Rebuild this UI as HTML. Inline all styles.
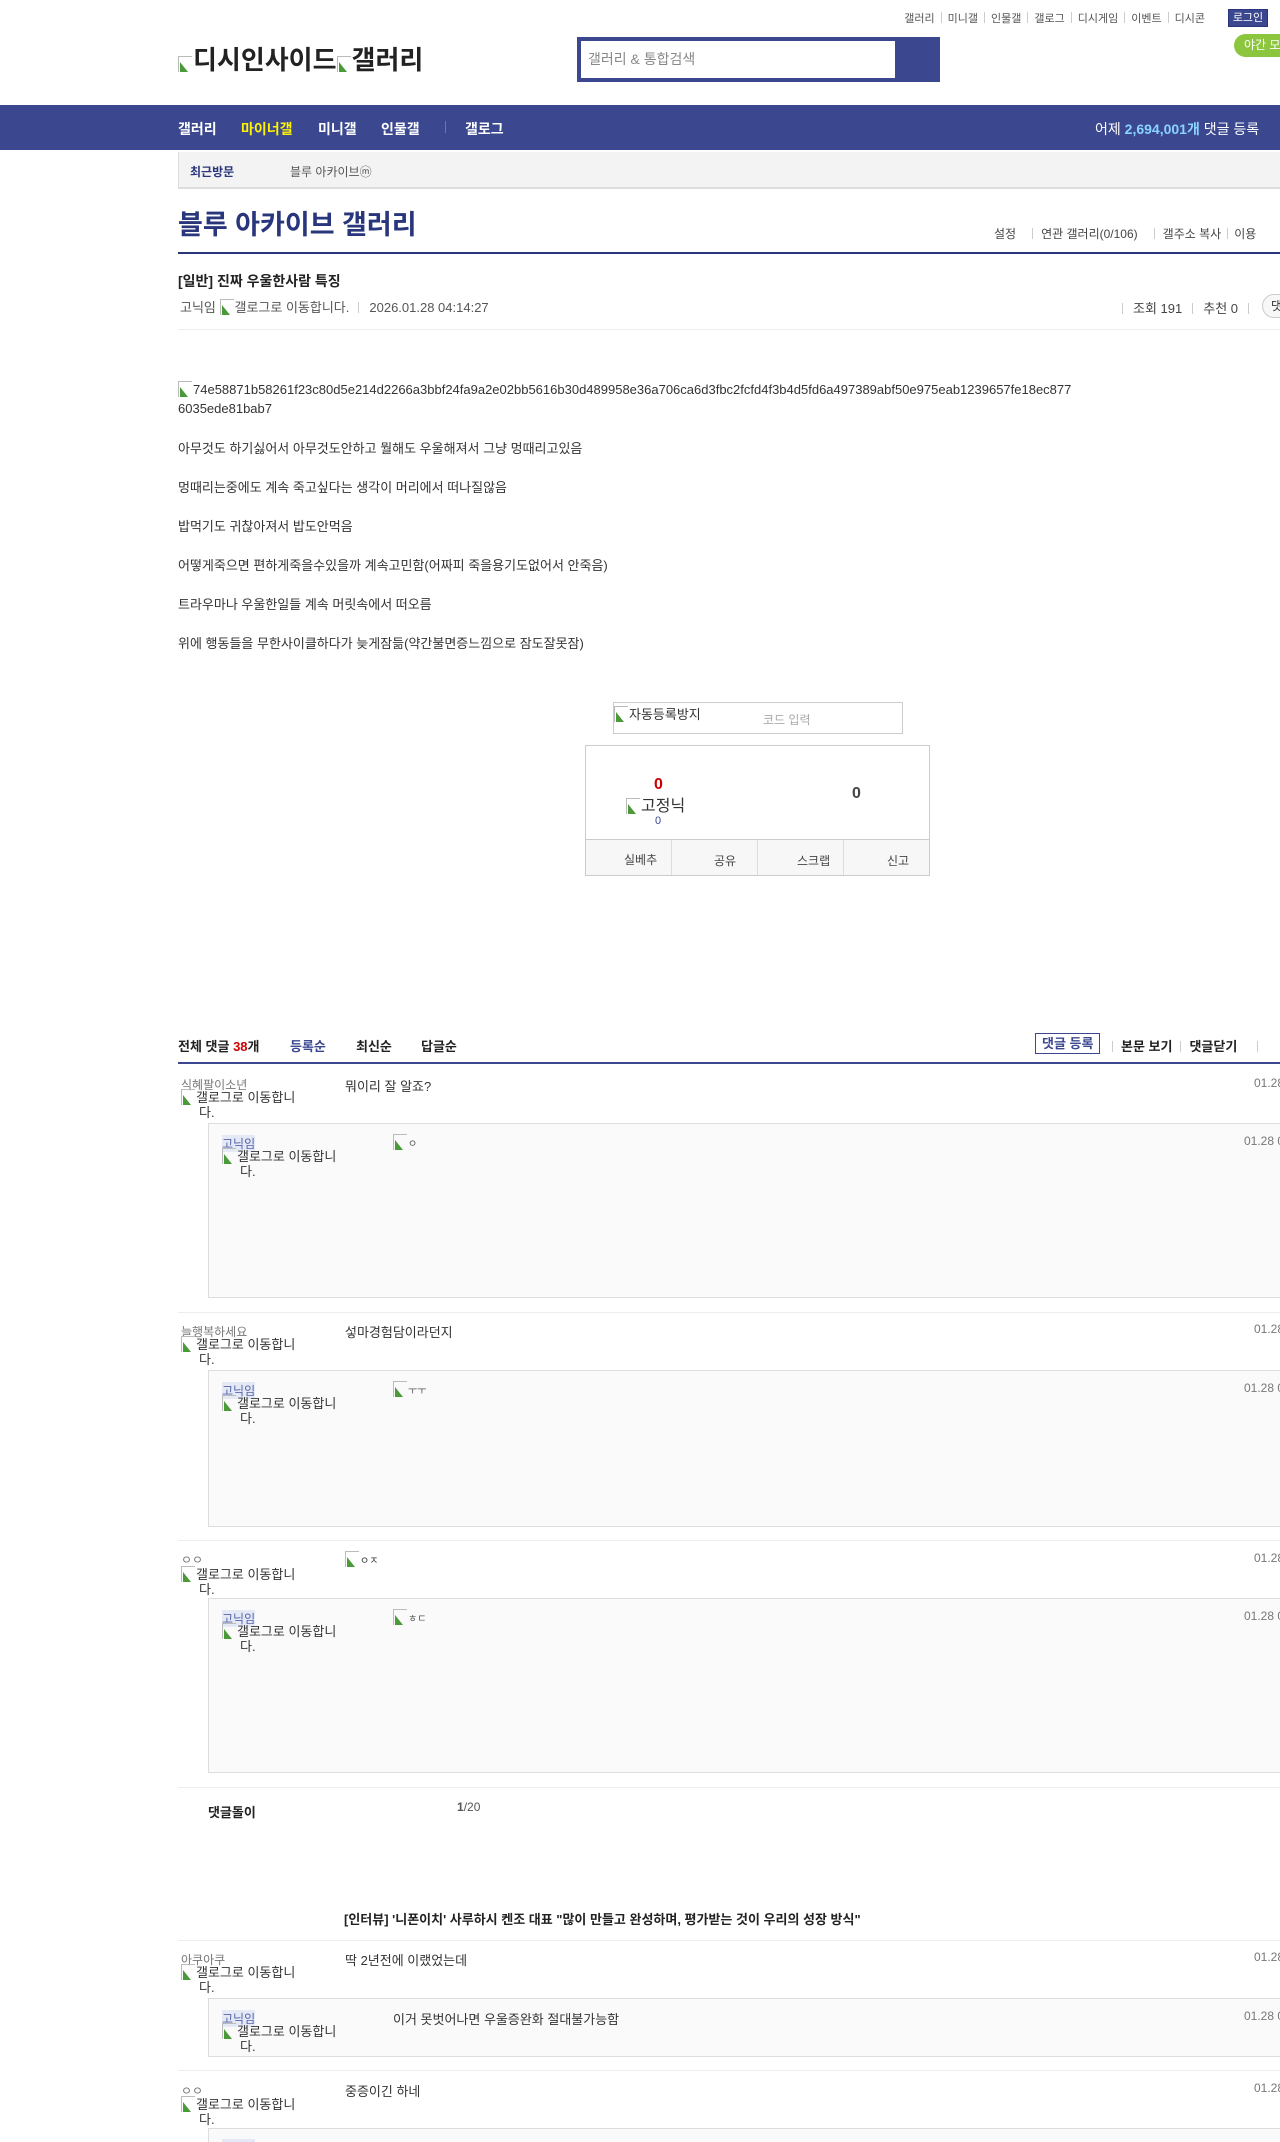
<!DOCTYPE html>
<html lang="ko"><head><meta charset="utf-8">
<style>
*{margin:0;padding:0;box-sizing:border-box}
html,body{width:1280px;height:2142px;overflow:hidden;background:#fff}
body{position:relative;font-family:"Liberation Sans","Noto Sans CJK KR",sans-serif;color:#333;font-size:13px}
.a{position:absolute;white-space:nowrap}
.g{color:#777}
.sep{display:inline-block;width:1px;height:11px;background:#ccc;margin:0 6px;vertical-align:-1px}
.broken{display:inline-block;width:14px;height:16px;vertical-align:-3px;border:1px solid #bbb;border-right:none;border-bottom:none;position:relative;margin-right:1px}
.broken:after{content:"";position:absolute;left:1px;bottom:0;width:0;height:0;border-left:8px solid #4a9a3a;border-top:10px solid transparent}
.cnick{color:#777;font-size:12px}
.galo{font-size:13px;color:#333;line-height:15px}
.rbox{position:absolute;left:208px;width:1100px;background:#fafafa;border:1px solid #ddd}
.rnick{background:#e5e9f5;color:#5567a9;font-size:12px}
.hl{position:absolute;left:178px;width:1102px;height:1px;background:#eee}
.nv{font-size:14px;font-weight:bold;color:#fff}
</style></head><body>

<div class="a" style="top:10px;right:75px;font-size:11px;color:#555">갤러리<span class="sep"></span>미니갤<span class="sep"></span>인물갤<span class="sep"></span>갤로그<span class="sep"></span>디시게임<span class="sep"></span>이벤트<span class="sep"></span>디시콘</div>
<div class="a" style="left:1228px;top:9px;width:40px;height:18px;background:#3b4890;border:1px solid #29367c;color:#fff;font-size:11px;line-height:16px;text-align:center">로그인</div>
<div class="a" style="left:1234px;top:34px;width:60px;height:23px;background:#8cc63f;border-radius:12px;color:#fff;font-size:12px;line-height:23px;padding-left:10px">야간 모드</div>

<div class="a" style="left:178px;top:40px;font-size:26px;font-weight:bold;color:#222"><span class="broken"></span>디시인사이드<span class="broken"></span>갤러리</div>
<div class="a" style="left:577px;top:37px;width:363px;height:45px;background:#3b4890"></div>
<div class="a" style="left:581px;top:41px;width:314px;height:37px;background:#fff;color:#888;font-size:14px;line-height:37px;padding-left:7px">갤러리 &amp; 통합검색</div>

<div class="a" style="left:0;top:105px;width:1280px;height:45px;background:#3b4890"></div>
<div class="a nv" style="left:178px;top:119px">갤러리</div>
<div class="a nv" style="left:241px;top:119px;color:#fff200">마이너갤</div>
<div class="a nv" style="left:318px;top:119px">미니갤</div>
<div class="a nv" style="left:381px;top:119px">인물갤</div>
<div class="a" style="left:445px;top:121px;width:1px;height:12px;background:#6a76b0"></div>
<div class="a nv" style="left:465px;top:119px">갤로그</div>
<div class="a" style="left:1095px;top:119px;font-size:14px;color:#fff">어제 <b style="color:#8ad3ff">2,694,001개</b> 댓글 등록</div>

<div class="a" style="left:178px;top:152px;width:1102px;height:37px;background:#f3f3f3;border-bottom:2px solid #ddd;border-left:1px solid #ddd"></div>
<div class="a" style="left:190px;top:163px;font-size:12px;font-weight:bold;color:#29367c">최근방문</div>
<div class="a" style="left:290px;top:163px;font-size:12px;color:#555">블루 아카이브ⓜ</div>

<div class="a" style="left:178px;top:203px;font-size:27px;font-weight:bold;color:#29367c">블루 아카이브 갤러리</div>
<div class="a" style="left:994px;top:225px;font-size:12px;color:#444">설정<span class="sep" style="margin:0 8px 0 16px"></span>연관 갤러리(0/106)<span class="sep" style="margin:0 8px 0 16px"></span>갤주소 복사<span class="sep"></span>이용</div>
<div class="a" style="left:178px;top:252px;width:1102px;height:2px;background:#29367c"></div>

<div class="a" style="left:178px;top:271px;font-size:14px;font-weight:bold;color:#222">[일반] 진짜 우울한사람 특징</div>
<div class="a" style="left:180px;top:297px;font-size:13px;color:#555">고닉임 <span class="broken"></span>갤로그로 이동합니다.<span class="sep" style="margin:0 10px 0 9px"></span>2026.01.28 04:14:27</div>
<div class="a" style="left:1122px;top:298px;font-size:13px;color:#444"><span class="sep" style="margin:0 10px 0 0"></span>조회 191<span class="sep" style="margin:0 10px"></span>추천 0<span class="sep" style="margin:0 10px"></span></div>
<div class="a" style="left:1262px;top:294px;width:30px;height:24px;border:1px solid #ccc;border-radius:12px;background:#f7f7f7;font-size:12px;line-height:22px;padding-left:8px">댓</div>
<div class="hl" style="top:329px"></div>

<div class="a" style="left:178px;top:380px;font-size:13px;line-height:19px;color:#333;white-space:normal;width:900px;word-break:break-all"><span class="broken"></span>74e58871b58261f23c80d5e214d2266a3bbf24fa9a2e02bb5616b30d489958e36a706ca6d3fbc2fcfd4f3b4d5fd6a497389abf50e975eab1239657fe18ec877 6035ede81bab7</div>
<div class="a" style="left:178px;top:438px">아무것도 하기싫어서 아무것도안하고 뭘해도 우울해져서 그냥 멍때리고있음</div>
<div class="a" style="left:178px;top:477px">멍때리는중에도 계속 죽고싶다는 생각이 머리에서 떠나질않음</div>
<div class="a" style="left:178px;top:516px">밥먹기도 귀찮아져서 밥도안먹음</div>
<div class="a" style="left:178px;top:555px">어떻게죽으면 편하게죽을수있을까 계속고민함(어짜피 죽을용기도없어서 안죽음)</div>
<div class="a" style="left:178px;top:594px">트라우마나 우울한일들 계속 머릿속에서 떠오름</div>
<div class="a" style="left:178px;top:633px">위에 행동들을 무한사이클하다가 늦게잠듦(약간불면증느낌으로 잠도잘못잠)</div>

<div class="a" style="left:613px;top:702px;width:290px;height:32px;border:1px solid #ccc"></div>
<div class="a" style="left:614px;top:704px;font-size:13px;color:#333"><span class="broken"></span>자동등록방지</div>
<div class="a" style="left:763px;top:711px;font-size:12px;color:#aaa">코드 입력</div>

<div class="a" style="left:585px;top:745px;width:345px;height:131px;border:1px solid #ccc"></div>
<div class="a" style="left:654px;top:776px;font-size:16px;font-weight:bold;color:#c00">0</div>
<div class="a" style="left:626px;top:792px;font-size:16px;color:#333"><span class="broken"></span>고정닉</div>
<div class="a" style="left:655px;top:815px;font-size:11px;color:#3b4890">0</div>
<div class="a" style="left:852px;top:785px;font-size:16px;font-weight:bold;color:#444">0</div>
<div class="a" style="left:586px;top:839px;width:343px;height:36px;background:#f7f7f7;border-top:1px solid #ccc"></div>
<div class="a" style="left:671px;top:840px;width:1px;height:35px;background:#ddd"></div>
<div class="a" style="left:757px;top:840px;width:1px;height:35px;background:#ddd"></div>
<div class="a" style="left:843px;top:840px;width:1px;height:35px;background:#ddd"></div>
<div class="a" style="left:624px;top:851px;font-size:12px;color:#444">실베추</div>
<div class="a" style="left:714px;top:852px;font-size:12px;color:#444">공유</div>
<div class="a" style="left:797px;top:852px;font-size:12px;color:#444">스크랩</div>
<div class="a" style="left:887px;top:852px;font-size:12px;color:#444">신고</div>

<div class="a" style="left:178px;top:1036px;font-size:13px;font-weight:bold;color:#222">전체 댓글 <span style="color:#c00">38</span>개</div>
<div class="a" style="left:290px;top:1036px;font-size:13px;font-weight:bold;color:#3b4890">등록순</div>
<div class="a" style="left:356px;top:1036px;font-size:13px;font-weight:bold;color:#222">최신순</div>
<div class="a" style="left:421px;top:1036px;font-size:13px;font-weight:bold;color:#222">답글순</div>
<div class="a" style="left:1035px;top:1033px;height:21px;border:1px solid #3b4890;padding:0 6px;font-size:13px;font-weight:bold;color:#3b4890;line-height:19px">댓글 등록</div>
<div class="a" style="left:1112px;top:1036px;font-size:13px;font-weight:bold;color:#222"><span class="sep" style="margin:0 8px 0 0"></span>본문 보기<span class="sep" style="margin:0 8px"></span>댓글닫기<span class="sep" style="margin:0 8px 0 20px"></span></div>
<div class="a" style="left:178px;top:1062px;width:1102px;height:2px;background:#3b4890"></div>

<div class="a cnick" style="left:181px;top:1076px">식혜팔이소년</div>
<div class="a galo" style="left:181px;top:1089px"><span class="broken"></span>갤로그로 이동합니<br>&nbsp;&nbsp;&nbsp;&nbsp;&nbsp;다.</div>
<div class="a" style="left:345px;top:1076px">뭐이리 잘 알죠?</div>
<div class="a g" style="left:1254px;top:1076px;font-size:12px">01.28</div>
<div class="rbox" style="top:1123px;height:175px"></div>
<div class="a rnick" style="left:222px;top:1135px">고닉임</div>
<div class="a galo" style="left:222px;top:1148px"><span class="broken"></span>갤로그로 이동합니<br>&nbsp;&nbsp;&nbsp;&nbsp;&nbsp;다.</div>
<div class="a" style="left:393px;top:1134px;font-size:10px;color:#555"><span class="broken"></span>ㅇ</div>
<div class="a g" style="left:1244px;top:1134px;font-size:12px">01.28 0</div>
<div class="hl" style="top:1312px"></div>

<div class="a cnick" style="left:181px;top:1323px">늘행복하세요</div>
<div class="a galo" style="left:181px;top:1336px"><span class="broken"></span>갤로그로 이동합니<br>&nbsp;&nbsp;&nbsp;&nbsp;&nbsp;다.</div>
<div class="a" style="left:345px;top:1322px">섷마경험담이라던지</div>
<div class="a g" style="left:1254px;top:1322px;font-size:12px">01.28</div>
<div class="rbox" style="top:1370px;height:157px"></div>
<div class="a rnick" style="left:222px;top:1382px">고닉임</div>
<div class="a galo" style="left:222px;top:1395px"><span class="broken"></span>갤로그로 이동합니<br>&nbsp;&nbsp;&nbsp;&nbsp;&nbsp;다.</div>
<div class="a" style="left:393px;top:1381px;font-size:10px;color:#555"><span class="broken"></span>ㅜㅜ</div>
<div class="a g" style="left:1244px;top:1381px;font-size:12px">01.28 0</div>
<div class="hl" style="top:1540px"></div>

<div class="a cnick" style="left:181px;top:1551px">ㅇㅇ</div>
<div class="a galo" style="left:181px;top:1566px"><span class="broken"></span>갤로그로 이동합니<br>&nbsp;&nbsp;&nbsp;&nbsp;&nbsp;다.</div>
<div class="a" style="left:345px;top:1551px;font-size:10px"><span class="broken"></span>ㅇㅈ</div>
<div class="a g" style="left:1254px;top:1551px;font-size:12px">01.28</div>
<div class="rbox" style="top:1598px;height:175px"></div>
<div class="a rnick" style="left:222px;top:1610px">고닉임</div>
<div class="a galo" style="left:222px;top:1623px"><span class="broken"></span>갤로그로 이동합니<br>&nbsp;&nbsp;&nbsp;&nbsp;&nbsp;다.</div>
<div class="a" style="left:393px;top:1609px;font-size:10px;color:#555"><span class="broken"></span>ㅎㄷ</div>
<div class="a g" style="left:1244px;top:1609px;font-size:12px">01.28 0</div>
<div class="hl" style="top:1787px"></div>

<div class="a" style="left:208px;top:1802px;font-size:13px;font-weight:bold;color:#222">댓글돌이</div>
<div class="a" style="left:457px;top:1800px;font-size:12px;color:#555"><b>1</b>/20</div>

<div class="a" style="left:344px;top:1909px;font-size:13px;font-weight:bold;color:#222">[인터뷰] '니폰이치' 사루하시 켄조 대표 "많이 만들고 완성하며, 평가받는 것이 우리의 성장 방식"</div>
<div class="hl" style="top:1940px"></div>

<div class="a cnick" style="left:181px;top:1951px">아쿠아쿠</div>
<div class="a galo" style="left:181px;top:1964px"><span class="broken"></span>갤로그로 이동합니<br>&nbsp;&nbsp;&nbsp;&nbsp;&nbsp;다.</div>
<div class="a" style="left:345px;top:1950px">딱 2년전에 이랬었는데</div>
<div class="a g" style="left:1254px;top:1950px;font-size:12px">01.28</div>
<div class="rbox" style="top:1998px;height:59px"></div>
<div class="a rnick" style="left:222px;top:2010px">고닉임</div>
<div class="a galo" style="left:222px;top:2023px"><span class="broken"></span>갤로그로 이동합니<br>&nbsp;&nbsp;&nbsp;&nbsp;&nbsp;다.</div>
<div class="a" style="left:393px;top:2009px">이거 못벗어나면 우울증완화 절대불가능함</div>
<div class="a g" style="left:1244px;top:2009px;font-size:12px">01.28 0</div>
<div class="hl" style="top:2070px"></div>

<div class="a cnick" style="left:181px;top:2082px">ㅇㅇ</div>
<div class="a galo" style="left:181px;top:2096px"><span class="broken"></span>갤로그로 이동합니<br>&nbsp;&nbsp;&nbsp;&nbsp;&nbsp;다.</div>
<div class="a" style="left:345px;top:2081px">중증이긴 하네</div>
<div class="a g" style="left:1254px;top:2081px;font-size:12px">01.28</div>
<div class="rbox" style="top:2128px;height:60px"></div>
<div class="a rnick" style="left:222px;top:2139px">고닉임</div>

</body></html>
